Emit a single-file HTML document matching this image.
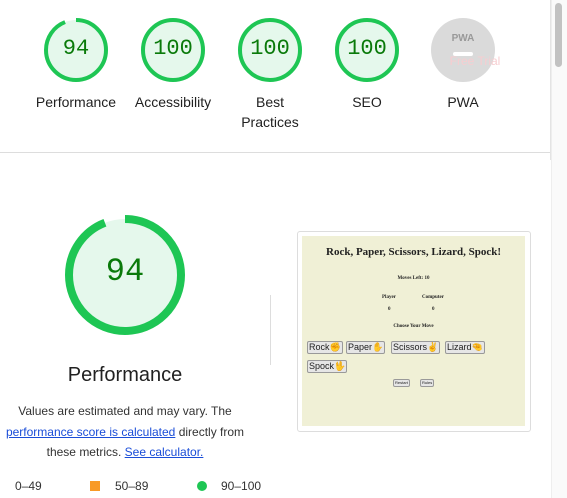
<html><head><style>
body{margin:0;width:567px;height:498px;background:#fff;font-family:"Liberation Sans",sans-serif;position:relative;overflow:hidden;color:#212121}
.lab{position:absolute;font-size:14px;text-align:center;width:110px;line-height:20px}
.sc{position:absolute;font-family:"Liberation Mono",monospace;font-size:22px;color:#0a7a0a;width:70px;text-align:center}
a{color:#1a4dd8}
.b{position:absolute;border:1px solid #999;background:#e6e6e6;font-size:9px;padding:0 1px;line-height:11px;border-radius:2px}
</style></head><body>
<svg width="567" height="160" style="position:absolute;left:0;top:0">
<g fill="#e5f8ec" stroke="#1ec654" stroke-width="4">
<circle cx="173" cy="50" r="30"/><circle cx="270" cy="50" r="30"/><circle cx="367" cy="50" r="30"/>
<circle cx="76" cy="50" r="30" stroke="none"/>
<circle cx="76" cy="50" r="30" fill="none" stroke-dasharray="177 200" style="transform:rotate(-90deg);transform-origin:76px 50px"/>
</g>
<circle cx="463" cy="50" r="32" fill="#dadada"/>
<text x="463" y="41" font-size="10" font-weight="bold" fill="#999" text-anchor="middle" font-family="Liberation Sans">PWA</text>
<rect x="453" y="52" width="20" height="4" rx="2" fill="#fff"/>
<text x="475" y="65" font-size="12" fill="#f7cdd0" text-anchor="middle" font-family="Liberation Sans">Free Trial</text>
<line x1="0" y1="152.5" x2="550" y2="152.5" stroke="#ddd"/>
<line x1="550.5" y1="0" x2="550.5" y2="160" stroke="#e4e4e4"/>
</svg>
<div style="position:absolute;left:551px;top:0;width:16px;height:498px;background:#fafafa;border-left:1px solid #eee"></div>
<div style="position:absolute;left:555px;top:3px;width:7px;height:64px;background:#c2c2c2;border-radius:4px"></div>
<div class="sc" style="left:41px;top:36px">94</div>
<div class="sc" style="left:138px;top:36px">100</div>
<div class="sc" style="left:235px;top:36px">100</div>
<div class="sc" style="left:332px;top:36px">100</div>
<div class="lab" style="left:21px;top:92px">Performance</div>
<div class="lab" style="left:118px;top:92px">Accessibility</div>
<div class="lab" style="left:215px;top:92px">Best<br>Practices</div>
<div class="lab" style="left:312px;top:92px">SEO</div>
<div class="lab" style="left:408px;top:92px">PWA</div>
<svg width="300" height="200" style="position:absolute;left:0;top:200px">
<circle cx="125" cy="75" r="56" fill="#e5f8ec"/>
<circle cx="125" cy="75" r="56" fill="none" stroke="#1ec654" stroke-width="8" stroke-dasharray="331 400" style="transform:rotate(-90deg);transform-origin:125px 75px"/>
<line x1="270.5" y1="95" x2="270.5" y2="165" stroke="#ddd"/>
</svg>
<div style="position:absolute;left:65px;top:253px;width:120px;text-align:center;font-family:'Liberation Mono',monospace;font-size:32px;color:#0a7a0a">94</div>
<div style="position:absolute;left:25px;top:364px;width:200px;text-align:center;font-size:20px">Performance</div>
<div style="position:absolute;left:0;top:401px;width:250px;text-align:center;font-size:12px;line-height:20.5px;color:#333">Values are estimated and may vary. The<br><a href="#" style="text-decoration:underline">performance score is calculated</a> directly from<br>these metrics. <a href="#">See calculator.</a></div>
<div style="position:absolute;top:479px;left:15px;font-size:12px;color:#333">0–49</div>
<div style="position:absolute;top:481px;left:90px;width:10px;height:10px;background:#f89a27"></div>
<div style="position:absolute;top:479px;left:115px;font-size:12px;color:#333">50–89</div>
<div style="position:absolute;top:481px;left:197px;width:10px;height:10px;border-radius:50%;background:#1ec654"></div>
<div style="position:absolute;top:479px;left:221px;font-size:12px;color:#333">90–100</div>
<div style="position:absolute;left:297px;top:231px;width:232px;height:199px;border:1px solid #ddd;border-radius:3px;background:#fff"></div>
<div style="position:absolute;left:302px;top:236px;width:223px;height:190px;background:#f0f0d6;font-family:'Liberation Serif',serif;font-weight:bold;color:#222">
<div style="position:absolute;top:10px;width:100%;text-align:center;font-size:11px">Rock, Paper, Scissors, Lizard, Spock!</div>
<div style="position:absolute;top:40px;width:100%;text-align:center;font-size:5px">Moves Left: 10</div>
<div style="position:absolute;top:59px;left:80px;font-size:5px">Player</div>
<div style="position:absolute;top:59px;left:120px;font-size:5px">Computer</div>
<div style="position:absolute;top:71px;left:86px;font-size:5px">0</div>
<div style="position:absolute;top:71px;left:130px;font-size:5px">0</div>
<div style="position:absolute;top:88px;width:100%;text-align:center;font-size:5px">Choose Your Move</div>
</div>
<div style="font-family:'Liberation Sans',sans-serif">
<span class="b" style="left:307px;top:341px">Rock✊</span>
<span class="b" style="left:346px;top:341px">Paper✋</span>
<span class="b" style="left:391px;top:341px">Scissors✌</span>
<span class="b" style="left:445px;top:341px">Lizard🤏</span>
<span class="b" style="left:307px;top:360px">Spock🖖</span>
<span class="b" style="left:393px;top:379px;font-size:4px;line-height:6px">Restart</span>
<span class="b" style="left:420px;top:379px;font-size:4px;line-height:6px">Rules</span>
</div>
</body></html>
